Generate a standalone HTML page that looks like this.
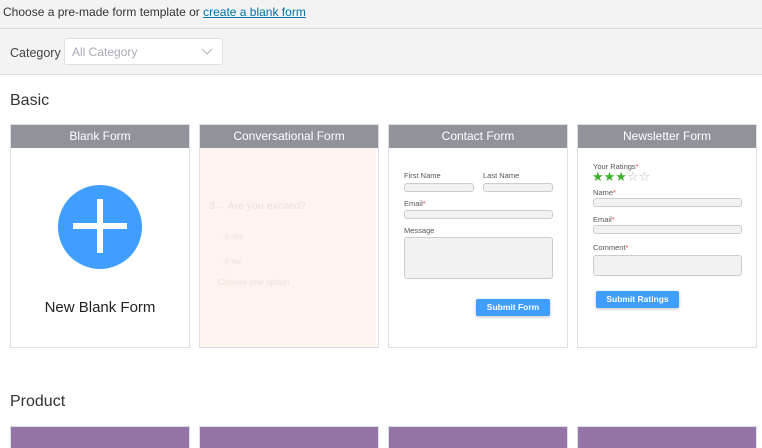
<!DOCTYPE html>
<html><head><meta charset="utf-8"><style>
*{margin:0;padding:0;box-sizing:border-box}
body{width:762px;height:448px;overflow:hidden;background:#fff;font-family:"Liberation Sans","DejaVu Sans",sans-serif;position:relative}
.a{position:absolute}
.top{left:0;top:0;width:762px;height:29px;background:#f3f3f3;border-bottom:1px solid #dcdcdc;font-size:12px;color:#333;padding:5px 0 0 3px}
.top a{color:#0073aa;text-decoration:underline}
.cat{left:0;top:29px;width:762px;height:46px;background:#f3f3f3;border-bottom:1px solid #dcdcdc}
.h{font-size:16px;color:#333;left:10px}
.card{width:180px;height:224px;top:124px;border:1px solid #dcdfe6;background:#fff}
.card .hd{height:23px;background:#909399;color:#fff;font-size:12px;text-align:center;line-height:23px}
.lbl{font-size:7.5px;color:#555}
.in{border:1px solid #ccc;background:#f2f2f2;border-radius:3px}
.st{color:#e44}
.btn{background:#409eff;color:#fff;font-size:8.5px;font-weight:bold;text-align:center;line-height:17px;border-radius:2px;box-shadow:0 1px 3px rgba(0,0,0,.25)}
.p{top:426px;width:180px;height:22px;background:#9575a8;border:1px solid #dcdfe6;border-bottom:none}
</style></head><body>
<div class="a top">Choose a pre-made form template or <a>create a blank form</a></div>
<div class="a cat">
 <div class="a" style="left:10px;top:17px;font-size:12.5px;color:#444">Category</div>
 <div class="a" style="left:64px;top:9px;width:159px;height:27px;background:#fff;border:1px solid #dcdfe6;border-radius:3px">
  <div class="a" style="left:7px;top:6px;font-size:12px;color:#aab">All Category</div>
  <svg class="a" style="left:136px;top:9px" width="12" height="8"><path d="M1 1l5 5 5-5" fill="none" stroke="#bbb" stroke-width="1.2"/></svg>
 </div>
</div>
<div class="a h" style="top:92px">Basic</div>

<div class="a card" style="left:10px">
 <div class="hd">Blank Form</div>
 <div class="a" style="left:47px;top:60px;width:84px;height:84px;border-radius:50%;background:#409eff"></div>
 <div class="a" style="left:62px;top:98px;width:54px;height:6px;background:#fff"></div>
 <div class="a" style="left:86px;top:74px;width:6px;height:54px;background:#fff"></div>
 <div class="a" style="left:0;width:178px;top:174px;text-align:center;font-size:15px;color:#222">New Blank Form</div>
</div>

<div class="a card" style="left:199px">
 <div class="hd">Conversational Form</div>
 <div class="a" style="left:0;top:23px;width:176px;height:199px;background:#fdf4ef"></div>
 <div class="a" style="left:9px;top:75px;font-size:10.5px;color:#ebe0da">3→ Are you excited?</div>
 <div class="a" style="left:23px;top:107px;font-size:7px;color:#ebe0da">Ⓐ Yes</div>
 <div class="a" style="left:23px;top:132px;font-size:7px;color:#ebe0da">Ⓑ No</div>
 <div class="a" style="left:18px;top:152px;font-size:8.5px;color:#ebe0da">Choose one option</div>
</div>

<div class="a card" style="left:388px">
 <div class="hd">Contact Form</div>
 <div class="a lbl" style="left:15px;top:46px">First Name</div>
 <div class="a lbl" style="left:94px;top:46px">Last Name</div>
 <div class="a in" style="left:15px;top:58px;width:70px;height:9px"></div>
 <div class="a in" style="left:94px;top:58px;width:70px;height:9px"></div>
 <div class="a lbl" style="left:15px;top:74px">Email<span class="st">*</span></div>
 <div class="a in" style="left:15px;top:85px;width:149px;height:9px"></div>
 <div class="a lbl" style="left:15px;top:101px">Message</div>
 <div class="a in" style="left:15px;top:112px;width:149px;height:42px"></div>
 <div class="a btn" style="left:87px;top:174px;width:74px;height:17px">Submit Form</div>
</div>

<div class="a card" style="left:577px">
 <div class="hd">Newsletter Form</div>
 <div class="a lbl" style="left:15px;top:37px">Your Ratings<span class="st">*</span></div>
 <div class="a" style="left:14px;top:45px;font-size:13px;line-height:14px"><span style="color:#3bb12a">★★★</span><span style="color:#bbb">☆☆</span></div>
 <div class="a lbl" style="left:15px;top:63px">Name<span class="st">*</span></div>
 <div class="a in" style="left:15px;top:73px;width:149px;height:9px"></div>
 <div class="a lbl" style="left:15px;top:90px">Email<span class="st">*</span></div>
 <div class="a in" style="left:15px;top:100px;width:149px;height:9px"></div>
 <div class="a lbl" style="left:15px;top:118px">Comment<span class="st">*</span></div>
 <div class="a in" style="left:15px;top:130px;width:149px;height:21px"></div>
 <div class="a btn" style="left:18px;top:166px;width:83px;height:17px">Submit Ratings</div>
</div>

<div class="a h" style="top:393px">Product</div>
<div class="a p" style="left:10px"></div>
<div class="a p" style="left:199px"></div>
<div class="a p" style="left:388px"></div>
<div class="a p" style="left:577px"></div>
</body></html>
